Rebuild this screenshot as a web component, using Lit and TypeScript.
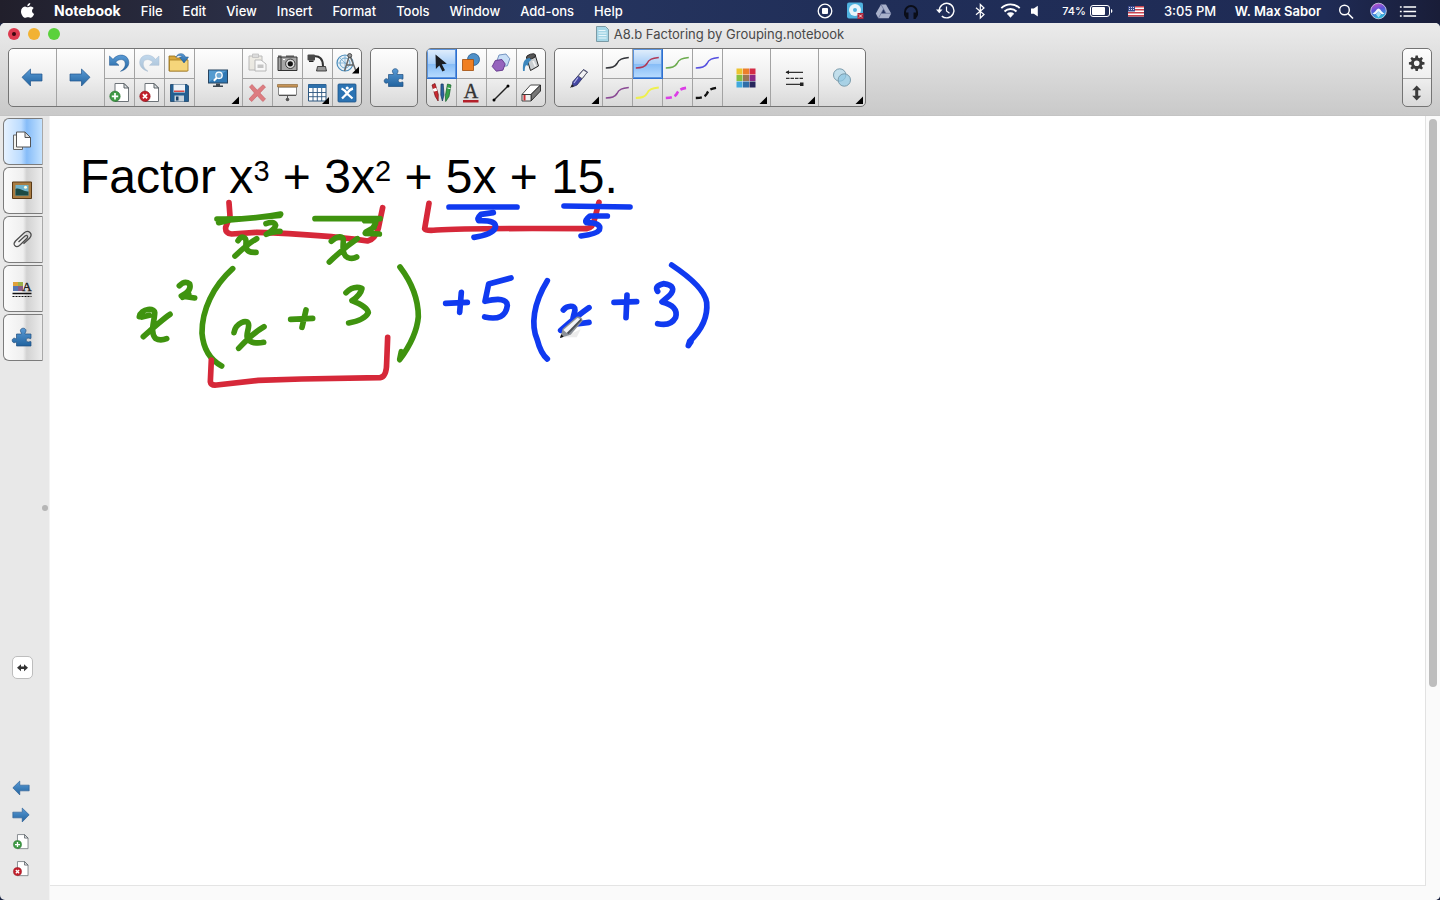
import { LitElement, html, svg, css, TemplateResult, SVGTemplateResult, nothing } from "lit";
import { customElement, state } from "lit/decorators.js";

type Art = SVGTemplateResult;
interface Tool { label: string; art: Art; }

const MENUS = ["File", "Edit", "View", "Insert", "Format", "Tools", "Window", "Add-ons", "Help"];

/* ---------- shared pieces ---------- */
const arrowLeft = svg`<path d="M13 28.300l8.500-8.300v5H33v7H21.500v5z" fill="url(#blue)" stroke="#1f548c" stroke-width=".7"/>`;
const arrowRight = svg`<path d="M33 28.300L24.500 20v5H13v7h11.500v5z" fill="url(#blue)" stroke="#1f548c" stroke-width=".7"/>`;
const bigCorner = svg`<path d="M44 47.500V55h-7.500z" fill="#000"/>`;
const smallCorner = svg`<path d="M26 18v7h-7z" fill="#000"/>`;
const page = svg`<path d="M10 4.500h9l4.500 4.500v13.500H10z" fill="#fff" stroke="#6d7378"/><path d="M19 4.500V9h4.500z" fill="#dfe3e6" stroke="#4d5358" stroke-width=".9"/>`;
const addPage = svg`${page}<circle cx="10" cy="17.300" r="5.200" fill="#3f9a45" stroke="#27722d" stroke-width=".6"/><path d="M6.800 17.300h6.400M10 14.100v6.400" stroke="#fff" stroke-width="1.700"/>`;
const removePage = svg`${page}<circle cx="10" cy="17.300" r="5.200" fill="#c21f2b" stroke="#8d121b" stroke-width=".6"/><path d="M7.900 15.200l4.200 4.200M12.100 15.200l-4.200 4.200" stroke="#fff" stroke-width="1.700"/>`;
const puzzle = svg`<path d="M17.500 25.500h4.800c.8-.6-.9-1.800-.9-3.300 0-1.500 1.300-2.500 2.800-2.500s2.800 1 2.800 2.500-1.500 2.700-.8 3.300h5.800v4.400c-.6.700-1.700-.3-2.700-.3-1.300 0-2.100.8-2.100 1.900s.9 2 2.100 2c1 0 2-.9 2.700-.3v4.300H17.500v-3.600c-.6-.7-1.200.3-2.200.3-1.200 0-2.100-1-2.100-2.300 0-1.200.9-2.200 2.100-2.200 1 0 1.600 1 2.200.4z" fill="url(#blue)" stroke="#1f4f80" stroke-width=".7"/>`;

const undoShape = svg`<path d="M4.500 7v9.300h9.500l-3.300-3.100c3-3.600 8.800-3.600 9.500.8.500 3.500-1.700 6.400-4.700 8.300 5-1.200 8.600-4.800 8.300-9.300C23.300 5.500 13.500 3.300 8 10.300z" fill="url(#blue)" stroke="#1f548c" stroke-width=".5"/>`;

const curve = (color: string, dash = "", w = 1.6): Art =>
  svg`<path d="M2.800 19c6-.2 9-.8 11.200-4.500 1.800-4.500 5.500-5.200 11.800-6" fill="none" stroke=${color} stroke-width=${w} stroke-dasharray=${dash || nothing}/>`;

/* ---------- toolbar icons ---------- */
const backTool: Tool = { label: "Previous page", art: arrowLeft };
const nextTool: Tool = { label: "Next page", art: arrowRight };

const fileTools: Tool[] = [
  { label: "Undo", art: undoShape },
  { label: "Redo", art: svg`<g transform="translate(28.500 0) scale(-1 1)" opacity=".35">${undoShape}</g>` },
  { label: "Open file", art: svg`<path d="M4 7h6l1.500 2H22v13H4z" fill="#d9a83c" stroke="#8f6a18" stroke-width=".8"/><path d="M4.500 11h18.500v11H4.500z" fill="#f5d57a" stroke="#a57c1f" stroke-width=".8"/><path d="M11 8C13 3.500 19 3.500 20.500 8H23.500l-4.500 6-4.500-6h2.700C16 6 13 6 11 8z" fill="url(#blue)" stroke="#1f548c" stroke-width=".5"/>` },
  { label: "Add page", art: addPage },
  { label: "Delete page", art: removePage },
  { label: "Save", art: svg`<path d="M5.500 5.500h16.500l1.500 1.500v15.500h-18z" fill="#235f92" stroke="#1a4268" stroke-width=".8"/><path d="M8.500 5.500h11.500v8H8.500z" fill="#eef3f8"/><path d="M9 11.500h10.500v1.500H9z" fill="#d84b48"/><path d="M9.500 16.500h9.500v6h-9.500z" fill="#c9d3dc"/><path d="M11 17.500h2.500v4H11z" fill="#1a4268"/>` },
];

const displayTool: Tool = { label: "Screen view", art: svg`<rect x="13.500" y="21" width="19" height="13" fill="#2f78b4" stroke="#274460"/><path d="M14 21.500h18L14 33z" fill="#6fb2e2" opacity=".6"/><circle cx="24" cy="26.300" r="3.200" fill="#6fa9d4" stroke="#fff" stroke-width="1.300"/><path d="M21.800 28.700l-3 3" stroke="#fff" stroke-width="2"/><path d="M21 34.500h4v2h3v1.500H18v-1.500h3z" fill="#3b4650"/>${bigCorner}` };

const editTools: Tool[] = [
  { label: "Paste", art: svg`<g opacity=".38"><path d="M6 7h13v14H6z" fill="#d9d4c2" stroke="#555"/><path d="M9.500 5h6v3.500h-6z" fill="#aaa" stroke="#555" stroke-width=".7"/><path d="M12 11h6l5 4v7H12z" fill="#fff" stroke="#555"/><path d="M14.500 15.500h6v3.500h-6z" fill="#777"/></g>` },
  { label: "Screen capture", art: svg`<path d="M5 8h19v13.500H5z" fill="#a6a6a6" stroke="#333"/><path d="M5 6.500h3.500V8H5zM13 6.500h8V8h-8z" fill="#555"/><path d="M8 8v13.500" stroke="#333"/><circle cx="17.300" cy="14.800" r="4.700" fill="#ddd" stroke="#333" stroke-width=".9"/><circle cx="17.300" cy="14.800" r="2.600" fill="#111"/><path d="M10 10.500h2" stroke="#fff"/>` },
  { label: "Document camera", art: svg`<path d="M10.500 7.500c6-1 9.500 2.500 9.500 9.500" fill="none" stroke="#333" stroke-width="2"/><rect x="4.500" y="5.500" width="7.500" height="6" rx="1" fill="#4a4a4a"/><path d="M6 11.500h4.500v1.500H6z" fill="#222"/><path d="M14.500 17.500h8l1 4.500H13.500z" fill="#999" stroke="#222" stroke-width=".8"/>` },
  { label: "Measurement tools", art: svg`<circle cx="12" cy="14" r="8" fill="#e6f0f7" stroke="#4a8cba" stroke-width="1.200"/><circle cx="12" cy="14" r="5" fill="none" stroke="#6aa5cb" stroke-width="1"/><path d="M4 14h9M12 6v16M6.500 8.500l8 8" stroke="#6aa5cb" stroke-width=".7"/><path d="M16 8l-4.500 14M17.500 8l5.500 14M13.500 16h7" fill="none" stroke="#666" stroke-width="1.500"/><circle cx="16.700" cy="6.500" r="2" fill="#999" stroke="#333" stroke-width=".8"/><path d="M26 17.500v7h-7z"/>` },
  { label: "Delete", art: svg`<path d="M6.500 8l2.500-2.500 5.200 5.700L20 5.800 22.500 8l-5.600 6 5.600 6-2.700 2.500-5.500-5.800L8.800 22.500 6 20l5.500-6z" fill="#dd7c80" stroke="#c8666b" stroke-width=".7"/>` },
  { label: "Screen shade", art: svg`<path d="M5.500 8h18v8h-18z" fill="#fff" stroke="#888"/><path d="M4.500 5.500h20v2.500h-20z" fill="#c69458" stroke="#87602c" stroke-width=".6"/><path d="M6 16.500h17" stroke="#555" stroke-width="1.200"/><path d="M14.500 16v3" stroke="#555"/><circle cx="14.500" cy="20.500" r="1.800" fill="#555"/>` },
  { label: "Table", art: svg`<path d="M5.500 5.500h17.500V22H5.500z" fill="#fff" stroke="#2c567f"/><path d="M5.500 5.500h17.500V9H5.500z" fill="#2e70ab"/><path d="M5.500 13.500H23M5.500 17.700H23M10 9v13M14.300 9v13M18.700 9v13" stroke="#2c567f" stroke-width=".9"/>${smallCorner}` },
  { label: "SMART Exchange", art: svg`<rect x="5" y="5" width="18" height="18" rx="1" fill="#2b73b3" stroke="#1e5385" stroke-width=".8"/><path d="M8.500 9.500c2.500 1 4 2.500 5.500 5 1.500-2.500 3.500-4.500 6-5M9 19.500l5-5 5.500 5" fill="none" stroke="#fff" stroke-width="2.300"/><circle cx="14.200" cy="9" r="1.600" fill="#fff"/>` },
];

const puzzleTool: Tool = { label: "Add-ons", art: puzzle };

const drawTools: Tool[] = [
  { label: "Select", art: svg`<path d="M8.500 5.500l11.300 9.200-5 .5 3.200 6-2.600 1.400-3.100-6.200L8.900 20z" fill="#1b1d22"/>` },
  { label: "Shapes", art: svg`<circle cx="16.500" cy="10.500" r="6" fill="#4f90c8" stroke="#23588c" stroke-width=".8"/><path d="M5.500 10.500h11v11h-11z" fill="#f07f22" stroke="#a04d0c" stroke-width=".8"/>` },
  { label: "Regular polygons", art: svg`<path d="M12 6l7-1 3.800 4.800-2.500 7-7 1-3.600-5.300z" fill="#c8def6" stroke="#5b7fb2" stroke-width=".8"/><path d="M8.300 11.500l6.600-1 3.300 4.500-2.300 6.200-6.600 1-4.100-4.700z" fill="#9663bd" stroke="#613689" stroke-width=".9"/>` },
  { label: "Fill", art: svg`<path d="M9.500 8.500l8.500-3L21.500 17l-8 4.500z" fill="#c9cdd0" stroke="#222"/><ellipse cx="14" cy="7.500" rx="4.800" ry="2.400" transform="rotate(-18 14 7.500)" fill="#555" stroke="#222" stroke-width=".8"/><path d="M10 9.500C7 11 5.500 14 6 22h1.700c0-3 .5-5 1.500-6 .8 1 2 1 2-.5 0-2 1-3 3-4.500l-1.500-2z" fill="#3d87bd"/><path d="M16 12l2.500 5.500" stroke="#f4f4f4" stroke-width="1.800"/>` },
  { label: "Pens", art: svg`<path d="M5 6l3-1.500 3.300 11-.2 6.500-2.800-4.500z" fill="#c92a30" stroke="#6e1014" stroke-width=".7"/><path d="M5.700 10l3.500-1.200 1 3-3.600 1z" fill="#fff"/><path d="M14 5h2.200l.8 11-1.600 6-1.600-6z" fill="#2c62a0" stroke="#15355c" stroke-width=".7"/><path d="M20.500 5l3.500 1-2 11.500-3.300 5-.3-6z" fill="#36a24a" stroke="#17602a" stroke-width=".7"/><path d="M20.500 9l3 .6" stroke="#fff"/>` },
  { label: "Text", art: svg`<text x="14" y="19" text-anchor="middle" font-family="Liberation Serif, serif" font-size="20" fill="#333" stroke="#333" stroke-width=".4">A</text><path d="M6 21h15.500v2.500H6z" fill="#b3202a"/>` },
  { label: "Lines", art: svg`<path d="M7 21L21 7" stroke="#222" stroke-width="1.400"/><circle cx="7" cy="21" r="1.500"/><circle cx="21" cy="7" r="1.500"/>` },
  { label: "Eraser", art: svg`<path d="M5 15.500L13.500 6h10L14 15.500z" fill="#fff" stroke="#333" stroke-width=".9"/><path d="M14 15.500L23.500 6v6L14 22z" fill="#777" stroke="#222" stroke-width=".9"/><path d="M5 15.500h9V22H5z" fill="#f0f0f0" stroke="#333" stroke-width=".9"/><path d="M6.500 16h2V21.500h-2z" fill="#c73035"/>` },
];

const penTool: Tool = { label: "Pen types", art: svg`<path d="M28.500 20.500l4 2.500-10.500 13L17 38l.8-5.200z" fill="#4447a3" stroke="#2b2e63" stroke-width=".8"/><path d="M28.300 21l3.800 2.300-5 6.300-3.800-2.600z" fill="#f3f3f6" stroke="#555" stroke-width=".7"/><path d="M23 28.500l-4 5.500" stroke="#b3b5e8" stroke-width="1.200"/><path d="M15 39l2-3.800 2 1.700z" fill="#222"/>${bigCorner}` };

const penLines: Tool[] = [
  { label: "Black pen", art: curve("#33353a") },
  { label: "Red pen", art: curve("#b03a58") },
  { label: "Green pen", art: curve("#6cab4e") },
  { label: "Blue pen", art: curve("#5550e0") },
  { label: "Purple pen", art: curve("#8a4a94") },
  { label: "Yellow highlighter", art: curve("#eef04e", "", 2) },
  { label: "Magenta dashed pen", art: curve("#dc3ee6", "6 3", 2.6) },
  { label: "Black dashed pen", art: curve("#111", "6 3", 2.4) },
];

const swatches = ["#ecc42f", "#ec7f2b", "#d42c46", "#86bf42", "#9b7653", "#8b2a86", "#41a9dd", "#2f6da8", "#27265c"];
const styleTools: Tool[] = [
  { label: "Colour", art: svg`${swatches.map((c, i) => svg`<rect x=${13.5 + (i % 3) * 6.5} y=${19.5 + Math.floor(i / 3) * 6.5} width="6" height="6" fill=${c}/>`)}${bigCorner}` },
  { label: "Line style", art: svg`<g stroke="#333" stroke-width="1.300"><path d="M15 23.300h17"/><path d="M15 29.300h17" stroke-dasharray="3.500 1"/><path d="M15 35.300h17"/></g><path d="M14.500 23.300l3.500-2v4zM29 33.500h3.500v3.500H29z" fill="#222"/>${bigCorner}` },
  { label: "Transparency", art: svg`<circle cx="20.700" cy="26" r="6.200" fill="#b5d9ea" fill-opacity=".8" stroke="#7b9cac"/><circle cx="25.300" cy="31" r="6.200" fill="#8cc6e2" fill-opacity=".7" stroke="#7b9cac"/>${bigCorner}` },
];

const windowTools: Tool[] = [
  { label: "Customize toolbar", art: svg`<circle cx="13.700" cy="14.300" r="4.300" fill="none" stroke="#3b3b3b" stroke-width="3"/>${[0, 45, 90, 135, 180, 225, 270, 315].map(a => svg`<path d="M12 9.500l.6-3h2.200l.6 3z" fill="#3b3b3b" transform="rotate(${a} 13.700 14.300)"/>`)}` },
  { label: "Move toolbar", art: svg`<path d="M13.700 6.500l4.500 4.800h-3v5.400h3l-4.500 4.800-4.500-4.800h3v-5.400h-3z" fill="#3b3b3b"/>` },
];

const tabs: Tool[] = [
  { label: "Page Sorter", art: svg`<path d="M9.500 16h9v14.500h-9z" fill="#f4f4f0" stroke="#666"/><path d="M12.500 13h8.500l5.500 5.500v9.500h-14z" fill="#fff" stroke="#555"/><path d="M21 13v5.500h5.500z" fill="#ddd" stroke="#555"/>` },
  { label: "Gallery", art: svg`<path d="M8.500 14h19v16.500h-19z" fill="#a97c42" stroke="#593a17"/><path d="M11.500 17h13v10.500h-13z" fill="#6fb3cc"/><path d="M11.500 21c4-2 8 3 13 2.500v4h-13z" fill="#1b4a44"/><circle cx="21.500" cy="19.300" r="1.500" fill="#fffce0"/>` },
  { label: "Attachments", art: svg`<path d="M14.500 25l6.500-6c2-1.600 3.600.4 2 2.200l-7.500 7.300c-3.800 2.800-7.200-1-4-4.500l8.500-8c4.500-3.800 9.500.8 5.500 5.200l-6 5.500" fill="none" stroke="#4c4c4c" stroke-width="1.300"/>` },
  { label: "Properties", art: svg`<path d="M9 16h5v4H9z" fill="#e1a13a"/><path d="M14 16h5v4h-5z" fill="#9bb04a"/><path d="M9 20h5v5H9z" fill="#5476b2"/><path d="M14 20h5v5h-5z" fill="#8b5b83"/><text x="23" y="25" text-anchor="middle" font-family="Liberation Serif, serif" font-size="13" fill="#222" stroke="#222" stroke-width=".4">A</text><path d="M8.500 27.500h19" stroke="#111" stroke-width="1.500"/><path d="M8.500 30.500h19" stroke="#111" stroke-dasharray="2 1"/>` },
  { label: "Add-ons", art: svg`<g transform="translate(-5 -6.500)">${puzzle}</g>` },
];

/* ---------- menu bar status icons: slot width and drawing ---------- */
const status: { label: string; slot: number; art: Art }[] = [
  { label: "Recording", slot: 30, art: svg`<circle cx="10" cy="10" r="6.800" fill="none" stroke="#fff" stroke-width="1.300"/><rect x="7" y="7" width="6" height="6" rx="1" fill="#fff"/>` },
  { label: "Disc utility", slot: 30, art: svg`<rect x="2" y="1.500" width="16" height="16" rx="2" fill="#4fb2df"/><circle cx="10" cy="9" r="6" fill="#e9f4fa"/><circle cx="10" cy="9" r="2" fill="#4fb2df"/><rect x="12.500" y="12" width="6" height="6" fill="#b02338"/><path d="M14 13.500l3 3M17 13.500l-3 3" stroke="#fff" stroke-width=".8"/>` },
  { label: "Drive", slot: 27, art: svg`<path d="M7.500 3.500h5l5.200 9-2.500 4.700H4.800L2.300 12.500z" fill="#a9b1cb"/><path d="M10 8l2.300 4.300H7.700z" fill="#22305c"/><path d="M7.500 3.500l5 8.800M7.700 12.300h9.800M5 17l5-9" stroke="#5c678f" stroke-width=".7"/>` },
  { label: "Headphones", slot: 28, art: svg`<path d="M4 14.500V11a6 6 0 0 1 12 0v3.500" fill="none" stroke="#0a0d18" stroke-width="2"/><path d="M4 11.500h3.500V18H5.500L3.500 15zM16 11.500h-3.500V18h2l2-3z" fill="#0a0d18"/>` },
  { label: "Time Machine", slot: 41, art: svg`<path d="M3.800 9.800a7.300 7.300 0 1 1 2.500 5.300" fill="none" stroke="#fff" stroke-width="1.400"/><path d="M.500 8.500h6.500l-3.200 3.800z" fill="#fff"/><path d="M11 5.500V10l3 2.300" fill="none" stroke="#fff" stroke-width="1.200"/>` },
  { label: "Bluetooth", slot: 28, art: svg`<path d="M6 6.800l8 6.700-3.700 3.500V3.500L14 7l-8 6.800" fill="none" stroke="#fff" stroke-width="1.200"/>` },
  { label: "Wi-Fi", slot: 33, art: svg`<path d="M.8 7.200a13 13 0 0 1 18.400 0M4 10.500a8.600 8.600 0 0 1 12 0M7 13.500a4.300 4.300 0 0 1 6 0" fill="none" stroke="#fff" stroke-width="1.900"/><path d="M7.600 14l2.400 2.700 2.400-2.700a3.500 3.500 0 0 0-4.800 0z" fill="#fff"/>` },
  { label: "Volume", slot: 16, art: svg`<path d="M5 7h3.500l5-3.500v13.500l-5-3.500H5z" fill="#fff"/>` },
];
const battery = svg`<rect x="0.500" y="4.500" width="19" height="11" rx="2.500" fill="none" stroke="#fff"/><rect x="2" y="6" width="13" height="8" rx="1" fill="#fff"/><path d="M21 8v4c1.800-.5 1.800-3.500 0-4z" fill="#fff"/>`;
const flag = svg`<path d="M2 5h16v10.500H2z" fill="#fff"/><path d="M2 5.800h16M2 8.700h16M2 11.700h16M2 14.700h16" stroke="#c9434f" stroke-width="1.500"/><path d="M2 5h7v5.500H2z" fill="#3a4a8c"/><path d="M3 6.500h5.500M3 8.500h5.500" stroke="#fff" stroke-width=".8" stroke-dasharray="1 1"/>`;
const search = svg`<circle cx="8.500" cy="9" r="4.800" fill="none" stroke="#fff" stroke-width="1.400"/><path d="M12 12.500l5 5" stroke="#fff" stroke-width="1.600"/>`;
const siri = svg`<circle cx="10.500" cy="10" r="7.800" fill="url(#siri)" stroke="#d4d7ef" stroke-width=".8"/><path d="M4.500 12.500c3-1 4-5 6-5s3 4 6 5c-2.500 1.500-4 .5-6-2.500-2 3-3.500 4-6 2.500z" fill="#fff" opacity=".95"/><path d="M8 13.500l2.500-4 2.500 4-2.500 3z" fill="#bdf5ff" opacity=".8"/>`;
const list = svg`<path d="M5 5.500h14M5 10.500h14M5 15.500h14M1 5.500h2M1 10.500h2M1 15.500h2" stroke="#fff" stroke-width="1.800"/>`;

@customElement("app-root")
export class AppRoot extends LitElement {
  @state() private pen = 1;
  @state() private drawTool = 0;
  @state() private tab = 0;

  static styles = css`
    :host { display: flex; flex-direction: column; height: 100vh; background: #1b2443; font-family: Inter, Roboto, sans-serif; }
    * { box-sizing: border-box; }
    button { appearance: none; border: 0; margin: 0; padding: 0; background: none; font: inherit; color: inherit; display: block; }
    svg { display: block; flex: none; overflow: visible; }
    .defs { position: absolute; width: 0; height: 0; }

    .menubar { display: flex; align-items: center; height: 23px; flex: none; padding: 0 23px 0 20px; color: #fff; font-size: 13px; font-weight: 500; background: linear-gradient(90deg, #211f2b 0, #2b3048 18%, #26355f 38%, #202e58 60%, #1f2b55 92%, #191d38 100%); }
    .menus { display: flex; align-items: center; gap: 20px; margin-left: 19px; white-space: nowrap; line-height: 20px; padding-bottom: 1px; }
    .app { font-weight: 700; font-size: 14px; }
    .status { display: flex; align-items: center; margin-left: auto; white-space: nowrap; line-height: 20px; padding-bottom: 1px; }
    .percent { width: 47px; padding-right: 4px; text-align: right; font-size: 11px; }
    .clock { width: 62px; text-align: center; }
    .user { width: 114px; text-align: center; font-weight: 600; }

    .window { flex: 1; min-height: 0; display: flex; flex-direction: column; background: #e8e8e8; border-radius: 5px; overflow: hidden; }
    .chrome { flex: none; height: 93px; background: linear-gradient(#ebebeb, #e3e3e3 25%, #c9c9c9); border-bottom: 1px solid #c4c4c4; }
    .titlebar { display: grid; grid-template-columns: 1fr auto 1fr; align-items: center; height: 22px; padding: 0 8px; }
    .lights { display: flex; gap: 8px; }
    .light { width: 12px; height: 12px; border-radius: 50%; display: grid; place-items: center; }
    .close { background: #dd3a4f; } .min { background: #f2b233; } .max { background: #5ad13c; }
    .close::after { content: ""; width: 4px; height: 4px; border-radius: 50%; background: #3c0710; }
    .title { display: flex; align-items: center; gap: 5px; font-size: 13px; color: #484848; margin: 0; font-weight: 400; white-space: nowrap; }

    .toolbar { display: flex; gap: 8px; padding: 3px 8px 0; }
    .group { display: flex; height: 59px; border: 1px solid #747474; border-radius: 5px; background: linear-gradient(#fdfdfd, #efefef 50%, #d9d9d9); overflow: hidden; }
    .last { margin-left: auto; }
    .big { width: 48px; height: 57px; border-right: 1px solid #a3a3a3; }
    .grid { display: grid; grid-template-rows: 30px 27px; grid-auto-columns: 30px; }
    .c1 { grid-template-columns: repeat(1, 30px); }
    .c3 { grid-template-columns: repeat(3, 30px); }
    .c4 { grid-template-columns: repeat(4, 30px); }
    .small { display: flex; align-items: flex-start; justify-content: flex-start; border-right: 1px solid #a3a3a3; width: 30px; }
    .small.top { border-bottom: 1px solid #a3a3a3; }
    .end { margin-right: -2px; }
    .on { background: linear-gradient(#e3effc, #a9cff8 50%, #86bcf6 52%, #b9dcff); box-shadow: inset 0 0 0 1px #5b93dd; }
    .small.on { border-color: #2d6fd0; }

    .body { flex: 1; min-height: 0; display: flex; }
    .side { width: 50px; flex: none; display: flex; flex-direction: column; padding: 2px 0 20px 3px; border-right: 1px solid #f3f3f3; position: relative; }
    .tabs { display: flex; flex-direction: column; gap: 2px; }
    .tab { width: 40px; height: 47px; border: 1px solid #7c7c7c; border-right-color: #a8a8a8; border-radius: 6px 0 0 6px; background: linear-gradient(90deg, #fbfbfb, #efefef 50%, #d2d2d2 60%, #ececec); }
    .tab.sel { background: linear-gradient(90deg, #e6f2ff, #bcdcff 45%, #86bcf8 60%, #c3e2ff); }
    .grip { position: absolute; right: 1px; top: 389px; width: 6px; height: 6px; border-radius: 50%; background: #b5b5b5; }
    .resize { margin: auto 0 98px 9px; width: 21px; height: 23px; border: 1px solid #bdbdbd; border-radius: 5px; background: #fff; }
    .pager { display: flex; flex-direction: column; gap: 5px; padding-left: 9px; }
    .page { position: relative; flex: 1; min-width: 0; background: #fff; border-right: 1px solid #e2e2e2; border-bottom: 1px solid #e4e4e4; margin-bottom: 14px; }
    .surface { flex: 1; min-width: 0; display: flex; background: #fafafa; }
    .problem { margin: 0; padding: 33px 0 0 30px; font: 48px/55px "Liberation Sans", Arial, sans-serif; color: #000; white-space: nowrap; }
    .problem sup { font-size: 29px; line-height: 0; vertical-align: 12px; }
    .ink { position: absolute; inset: 0; width: 100%; height: 100%; fill: none; stroke-width: 17; stroke-linecap: round; stroke-linejoin: round; }
    .red { stroke: #d62839; } .green { stroke: #3f930f; } .blue { stroke: #103af0; }
    .scroll { width: 14px; flex: none; padding: 3px 3px 14px; display: flex; flex-direction: column; }
    .thumb { height: 74%; border-radius: 4px; background: #bdbdbd; }
  `;

  private big(t: Tool, end = false): TemplateResult {
    return html`<button class="big ${end ? "end" : ""}" aria-label=${t.label}><svg width="48" height="57" viewBox="0 0 48 57">${t.art}</svg></button>`;
  }

  private grid(tools: Tool[], cols: number, selected = -1, pick: (i: number) => void = () => {}, end = false): TemplateResult {
    return html`<div class="grid c${cols} ${end ? "end" : ""}">${tools.map((t, i) => html`
      <button class="small ${i < tools.length / 2 ? "top" : ""} ${i === selected ? "on" : ""}" aria-label=${t.label} @click=${() => pick(i)}>
        <svg width="29" height="26" viewBox="0 0 29 26">${t.art}</svg></button>`)}</div>`;
  }

  private glyph(label: string, slot: number, art: Art): TemplateResult {
    return html`<button aria-label=${label}><svg width=${slot} height="20" viewBox="0 0 20 20">${art}</svg></button>`;
  }

  private ink(): SVGTemplateResult {
    return svg`
      <g transform="translate(20 24) scale(.33333)">
        <g class="red"><path d="M477 188L480 228L467 262Q465 280 485 282L560 277Q760 283 893 303Q915 298 925 265L938 203"/></g>
        <g class="green">
          <path d="M441 237Q540 240 632 222M446 248L480 240L630 226"/>
          <path d="M735 236H930"/>
          <path d="M588 251Q612 242 617 256Q615 268 589 283Q606 274 630 274"/>
          <path d="M504 302C515 285 530 290 528 310C526 332 536 338 558 337M560 296Q535 310 495 348"/>
          <path d="M884 242H918Q918 262 886 280L928 282M888 276L912 262"/>
          <path d="M784 304C800 288 822 284 820 304C818 330 818 345 834 353Q848 358 860 351M862 296Q820 325 778 366"/>
          <path d="M208 530C212 505 258 500 254 522C252 550 240 575 256 595Q270 604 290 596M300 523Q275 540 220 590M216 531L238 526"/>
          <path d="M328 437Q345 420 359 432Q366 452 334 468L374 474M338 472L356 462"/>
          <path d="M488 386C430 438 395 510 396 580Q402 650 455 678"/>
          <path d="M492 578C496 550 535 532 536 556C536 575 520 594 545 606Q560 611 581 607M582 560Q550 578 506 625"/>
          <path d="M662 538L728 535M708 510L696 562"/>
          <path d="M828 458Q850 436 876 445Q872 465 846 482Q892 500 895 518Q885 540 836 549"/>
          <path d="M990 381C1028 431 1045 481 1045 530Q1040 590 989 659L994 635"/>
        </g>
        <g class="red"><path d="M424 660L421 725Q423 737 440 735L565 721L695 717L930 713Q950 710 950 668L953 592"/></g>
      </g>
      <g transform="translate(350 24) scale(.33333)">
        <g class="red"><path d="M87 190L74 266Q78 274 110 270Q200 264 560 266Q580 263 584 236L597 187"/></g>
        <g class="blue">
          <path d="M147 201H351M492 198L690 201"/>
          <path d="M280 218L243 223Q230 235 236 242Q292 240 286 264Q276 284 222 292"/>
          <path d="M622 228H570Q552 242 560 248Q606 248 598 270Q590 282 543 288"/>
          <path d="M137 490L202 487M184 457L179 517"/>
          <path d="M333 414L266 432L255 484Q320 468 322 496Q316 545 254 531"/>
          <path d="M442 422C400 490 392 555 412 600Q422 640 442 657"/>
          <path d="M490 510C500 496 526 494 525 510C520 535 510 552 530 552Q545 550 567 547M567 503Q535 525 482 571"/>
          <path d="M642 487L710 485M681 465L678 533"/>
          <path d="M773 454Q762 438 790 431Q835 437 808 467L786 486Q836 498 827 532Q812 560 773 551"/>
          <path d="M815 375C875 415 915 455 920 487Q926 550 869 604L865 617L873 605"/>
        </g>
        <g stroke="none">
          <path d="M490 592h40l12-24z" fill="#d9d9d9" opacity=".5"/>
          <path d="M480 594l8-28 42-36q16-2 18 12l-36 42z" fill="#8c9198"/>
          <path d="M490 570l42-36q7 0 9 5l-38 42z" fill="#f3f4f6"/>
          <path d="M505 583l40-42-3-5-42 43z" fill="#4c5157"/>
          <path d="M480 594l4-11 7 7z" fill="#111"/>
        </g>
      </g>`;
  }

  render() {
    return html`
      <svg class="defs" aria-hidden="true"><defs>
        <linearGradient id="blue" x1="0" y1="0" x2="0" y2="1"><stop offset="0" stop-color="#5a9bd6"/><stop offset="1" stop-color="#21639f"/></linearGradient>
        <linearGradient id="siri" x1="0" y1="0" x2="0.300" y2="1"><stop offset="0" stop-color="#d94fc4"/><stop offset=".5" stop-color="#5a55d8"/><stop offset="1" stop-color="#2bb8d8"/></linearGradient>
      </defs></svg>
      <header class="menubar">
        <button aria-label="Apple menu"><svg width="15" height="17" viewBox="0 0 15 17"><path d="M10.300 0c.1 1.800-1.400 3.400-3 3.300C7.100 1.600 8.700.1 10.300 0zM7.600 4.200c.7 0 1.700-.9 3.200-.8 1.200.1 2.200.6 2.900 1.500-2.400 1.600-2.100 4.800.5 5.900-.5 1.500-1.800 3.900-3.300 4-1 0-1.500-.6-2.900-.6s-1.900.6-2.900.6C3.400 14.700 1 11.500 1 8.400c0-3 1.900-4.900 4-5 1.100 0 2 .8 2.600.8z" fill="#fff"/></svg></button>
        <nav class="menus">
          <button class="app">Notebook</button>
          ${MENUS.map(m => html`<button>${m}</button>`)}
        </nav>
        <div class="status">
          ${status.map(s => this.glyph(s.label, s.slot, s.art))}
          <span class="percent">74%</span>
          <button aria-label="Battery"><svg width="23" height="20" viewBox="0 0 23 20">${battery}</svg></button>
          ${this.glyph("Input source", 46, flag)}
          <button class="clock">3:05 PM</button>
          <button class="user">W. Max Sabor</button>
          ${this.glyph("Spotlight", 22, search)}
          ${this.glyph("Siri", 42, siri)}
          ${this.glyph("Notification Center", 18, list)}
        </div>
      </header>
      <main class="window">
        <div class="chrome">
          <div class="titlebar">
            <div class="lights">
              <button class="light close" aria-label="Close"></button>
              <button class="light min" aria-label="Minimize"></button>
              <button class="light max" aria-label="Zoom"></button>
            </div>
            <h1 class="title"><svg width="13" height="16" viewBox="0 0 13 16"><path d="M.5.500h9l3 3v12H.5z" fill="#a5d6e6" stroke="#7b9aa5"/><path d="M2.500 4.500h7M2.500 7h8M2.500 9.500h8M2.500 12h8" stroke="#e9f7fb"/></svg>A8.b Factoring by Grouping.notebook</h1>
          </div>
          <div class="toolbar">
            <div class="group">${this.big(backTool)}${this.big(nextTool)}${this.grid(fileTools, 3)}${this.big(displayTool)}${this.grid(editTools, 4, -1, undefined, true)}</div>
            <div class="group">${this.big(puzzleTool, true)}</div>
            <div class="group">${this.grid(drawTools, 4, this.drawTool, i => (this.drawTool = i), true)}</div>
            <div class="group">${this.big(penTool)}${this.grid(penLines, 4, this.pen, i => (this.pen = i))}${styleTools.map((t, i) => this.big(t, i === 2))}</div>
            <div class="group last">${this.grid(windowTools, 1, -1, undefined, true)}</div>
          </div>
        </div>
        <div class="body">
          <aside class="side">
            <div class="tabs">${tabs.map((t, i) => html`<button class="tab ${i === this.tab ? "sel" : ""}" aria-label=${t.label} @click=${() => (this.tab = i)}><svg width="38" height="45" viewBox="0 0 38 45">${t.art}</svg></button>`)}</div>
            <span class="grip"></span>
            <button class="resize" aria-label="Auto-hide"><svg width="19" height="21" viewBox="0 0 19 21"><path d="M4 10.800l4-3.500v2.300h3V7.300l4 3.500-4 3.500V12H8v2.300z" fill="#333"/></svg></button>
            <div class="pager">
              <button aria-label="Previous page"><svg width="18" height="22" viewBox="12 17.500 22 22">${arrowLeft}</svg></button>
              <button aria-label="Next page"><svg width="18" height="22" viewBox="12 17.500 22 22">${arrowRight}</svg></button>
              <button aria-label="Add page"><svg width="18" height="22" viewBox="3 1 23 26">${addPage}</svg></button>
              <button aria-label="Delete page"><svg width="18" height="22" viewBox="3 1 23 26">${removePage}</svg></button>
            </div>
          </aside>
          <section class="surface">
            <div class="page">
              <p class="problem">Factor x<sup>3</sup> + 3x<sup>2</sup> + 5x + 15.</p>
              <svg class="ink" role="img" aria-label="Handwritten working">${this.ink()}</svg>
            </div>
            <div class="scroll"><div class="thumb"></div></div>
          </section>
        </div>
      </main>`;
  }
}
